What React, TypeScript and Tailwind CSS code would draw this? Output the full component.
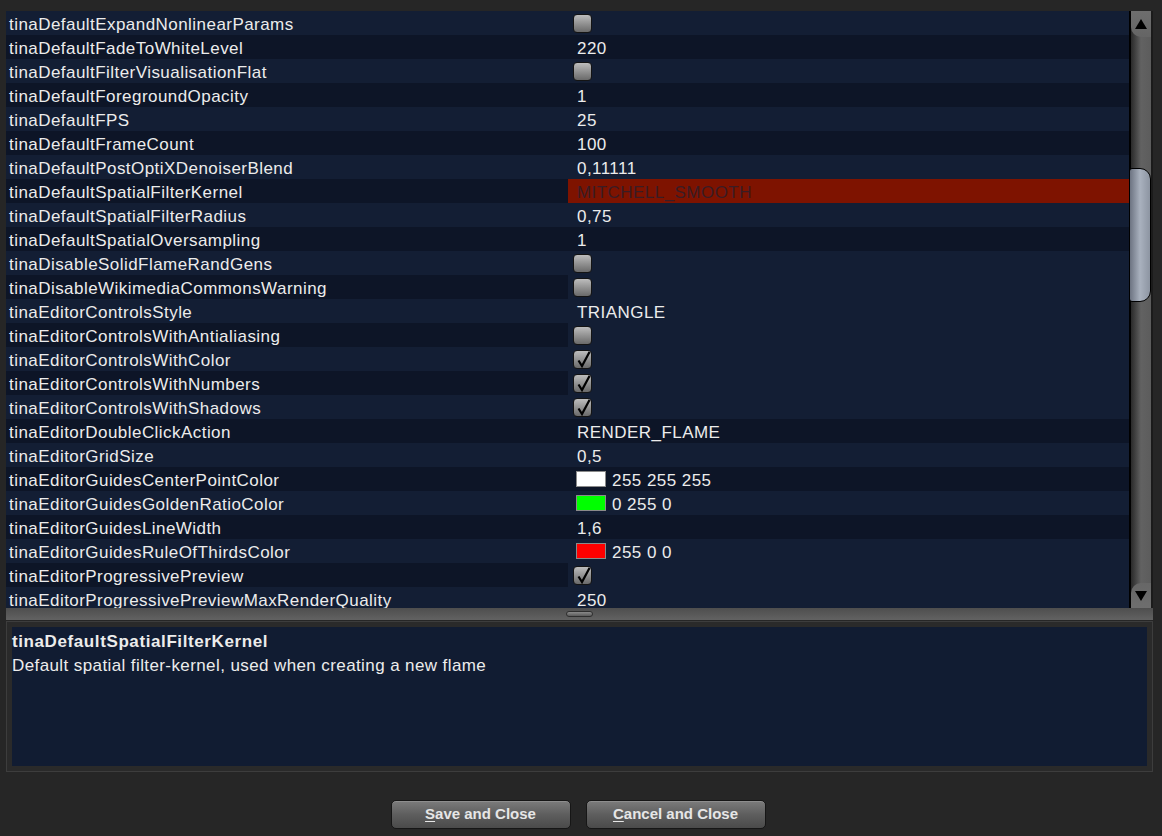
import React from "react";

type Row = { k: string; t: "cb" | "text" | "color"; v?: string; checked?: boolean; color?: string; sel?: boolean };

const rows: Row[] = [
  { k: "tinaDefaultExpandNonlinearParams", t: "cb" },
  { k: "tinaDefaultFadeToWhiteLevel", t: "text", v: "220" },
  { k: "tinaDefaultFilterVisualisationFlat", t: "cb" },
  { k: "tinaDefaultForegroundOpacity", t: "text", v: "1" },
  { k: "tinaDefaultFPS", t: "text", v: "25" },
  { k: "tinaDefaultFrameCount", t: "text", v: "100" },
  { k: "tinaDefaultPostOptiXDenoiserBlend", t: "text", v: "0,11111" },
  { k: "tinaDefaultSpatialFilterKernel", t: "text", v: "MITCHELL_SMOOTH", sel: true },
  { k: "tinaDefaultSpatialFilterRadius", t: "text", v: "0,75" },
  { k: "tinaDefaultSpatialOversampling", t: "text", v: "1" },
  { k: "tinaDisableSolidFlameRandGens", t: "cb" },
  { k: "tinaDisableWikimediaCommonsWarning", t: "cb" },
  { k: "tinaEditorControlsStyle", t: "text", v: "TRIANGLE" },
  { k: "tinaEditorControlsWithAntialiasing", t: "cb" },
  { k: "tinaEditorControlsWithColor", t: "cb", checked: true },
  { k: "tinaEditorControlsWithNumbers", t: "cb", checked: true },
  { k: "tinaEditorControlsWithShadows", t: "cb", checked: true },
  { k: "tinaEditorDoubleClickAction", t: "text", v: "RENDER_FLAME" },
  { k: "tinaEditorGridSize", t: "text", v: "0,5" },
  { k: "tinaEditorGuidesCenterPointColor", t: "color", v: "255 255 255", color: "#ffffff" },
  { k: "tinaEditorGuidesGoldenRatioColor", t: "color", v: "0 255 0", color: "#00ff00" },
  { k: "tinaEditorGuidesLineWidth", t: "text", v: "1,6" },
  { k: "tinaEditorGuidesRuleOfThirdsColor", t: "color", v: "255 0 0", color: "#ff0000" },
  { k: "tinaEditorProgressivePreview", t: "cb", checked: true },
  { k: "tinaEditorProgressivePreviewMaxRenderQuality", t: "text", v: "250" },
];

function Checkbox({ checked }: { checked?: boolean }) {
  return (
    <div className="relative ml-[5px] mt-[1px] w-[19px] h-[19px] rounded-[4px] border border-[#141414] bg-gradient-to-b from-[#bdbdbd] to-[#6a6a6a]">
      {checked && (
        <svg className="absolute left-0 top-[-2px]" width="19" height="21" viewBox="0 0 19 21">
          <path d="M4.5 11.5 L8 17 L15.5 3" fill="none" stroke="#000" strokeWidth="2.2" strokeLinejoin="miter" />
        </svg>
      )}
    </div>
  );
}

function TableRow({ r, i }: { r: Row; i: number }) {
  const bg = i % 2 === 0 ? "bg-[#131e34]" : "bg-[#0d1527]";
  const valBg = r.sel ? "bg-[#7e1300]" : r.t === "cb" ? "bg-[#131e34]" : bg;
  return (
    <div className="flex h-[24px] shrink-0 text-[17px] tracking-[0.45px]">
      <div className={`w-[562px] pl-[3px] pt-[3px] flex items-center text-[#ececec] whitespace-nowrap ${bg}`}>{r.k}</div>
      <div className={`flex-1 flex items-center whitespace-nowrap ${valBg}`}>
        {r.t === "cb" && <Checkbox checked={r.checked} />}
        {r.t === "text" && (
          <span className={`pl-[9px] pt-[3px] ${r.sel ? "text-[#3a1c24]" : "text-[#ececec]"}`}>{r.v}</span>
        )}
        {r.t === "color" && (
          <>
            <div className="ml-[8px] w-[30px] h-[16px] border border-[#8a8a8a]" style={{ backgroundColor: r.color }} />
            <span className="pl-[6px] pt-[3px] text-[#ececec]">{r.v}</span>
          </>
        )}
      </div>
    </div>
  );
}

function Scrollbar() {
  return (
    <div className="relative w-[24px] h-full bg-gradient-to-r from-[#000000] via-[#5a5a5a] to-[#5e5e5e] border-r-[2px] border-[#1b1b1b]">
      <div className="absolute left-[2px] right-0 top-0 bottom-0 bg-gradient-to-r from-[#2a2a2a] via-[#626262] to-[#5c5c5c]" />
      <div className="absolute left-[2px] right-0 top-0 h-[26px] bg-gradient-to-b from-[#6e6e6e] to-[#656565] rounded-bl-[10px] flex items-center justify-center">
        <svg width="12" height="10" viewBox="0 0 12 10"><path d="M6 0 L12 10 L0 10 Z" fill="#000" /></svg>
      </div>
      <div className="absolute left-0 right-0 top-[157px] h-[134px] rounded-r-[11px] rounded-l-[3px] border border-[#000] bg-gradient-to-r from-[#6d7482] via-[#a9b1be] to-[#8d95a2]" />
      <div className="absolute left-[2px] right-0 bottom-0 h-[25px] bg-gradient-to-b from-[#676767] to-[#6e6e6e] rounded-tl-[10px] flex items-center justify-center">
        <svg width="12" height="10" viewBox="0 0 12 10"><path d="M0 0 L12 0 L6 10 Z" fill="#000" /></svg>
      </div>
    </div>
  );
}

function Button({ first, rest }: { first: string; rest: string }) {
  return (
    <div className="w-[180px] h-[29px] rounded-[5px] border border-[#161616] bg-gradient-to-b from-[#7c7c7c] via-[#5e5e5e] to-[#4a4a4a] flex items-center justify-center text-[15px] font-bold text-[#e6e6e6] shadow-[inset_0_1px_0_rgba(255,255,255,0.15)]">
      <span className="underline underline-offset-[2px]">{first}</span>
      <span>{rest}</span>
    </div>
  );
}

export default function App() {
  return (
    <div className="w-[1162px] h-[836px] bg-[#262626] flex flex-col overflow-hidden font-['Liberation_Sans',Arial,sans-serif]">
      <div className="h-[11px] shrink-0" />
      <div className="flex h-[597px] shrink-0 pl-[6px]">
        <div className="w-[1123px] h-full overflow-hidden flex flex-col">
          {rows.map((r, i) => (
            <TableRow key={r.k} r={r} i={i} />
          ))}
        </div>
        <Scrollbar />
      </div>
      <div className="ml-[6px] w-[1147px] h-[12px] shrink-0 bg-gradient-to-b from-[#4e4e4e] to-[#626262] flex items-end justify-center">
        <div className="mb-[3px] w-[27px] h-[6px] rounded-full border border-[#2e2e2e] bg-gradient-to-b from-[#8a8a8a] to-[#5a5a5a]" />
      </div>
      <div className="h-[1px] shrink-0" />
      <div className="ml-[6px] w-[1147px] h-[151px] shrink-0 border border-[#3d3d3d] p-[5px] bg-[#2a2a2a]">
        <div className="w-full h-full bg-[#111c32] pl-[0px] pt-[3px] text-[17px] tracking-[0.4px] text-[#ececec] leading-[24px]">
          <div className="font-bold tracking-[0.6px]">tinaDefaultSpatialFilterKernel</div>
          <div>Default spatial filter-kernel, used when creating a new flame</div>
        </div>
      </div>
      <div className="flex justify-center gap-[15px] mt-[28px] pr-[6px]">
        <Button first="S" rest="ave and Close" />
        <Button first="C" rest="ancel and Close" />
      </div>
    </div>
  );
}
